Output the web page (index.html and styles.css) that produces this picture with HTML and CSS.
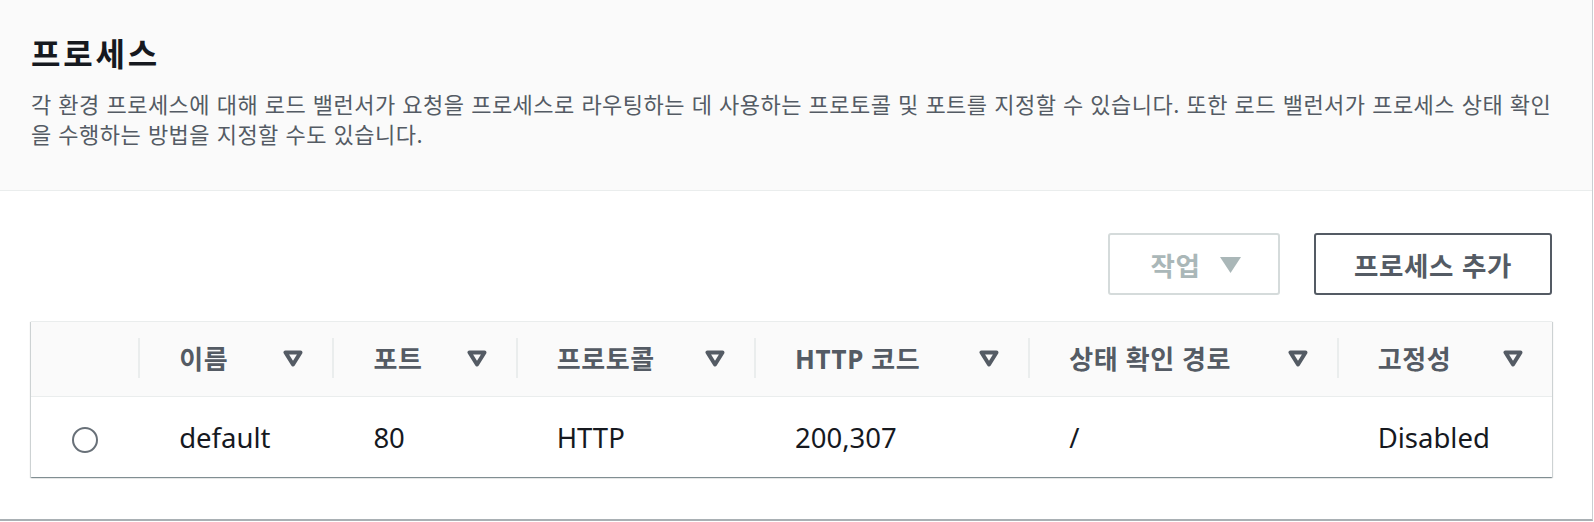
FILE: index.html
```html
<!DOCTYPE html>
<html lang="ko">
<head>
  <meta charset="UTF-8">
  <meta name="viewport" content="width=device-width, initial-scale=1.0">
  <title>프로세스</title>
  <link rel="stylesheet" href="styles.css">
</head>
<body>
  <section class="panel">
    <div class="panel-header">
      <h2 class="title">프로세스</h2>
      <p class="desc">각 환경 프로세스에 대해 로드 밸런서가 요청을 프로세스로 라우팅하는 데 사용하는 프로토콜 및 포트를 지정할 수 있습니다. 또한 로드 밸런서가 프로세스 상태 확인을 수행하는 방법을 지정할 수도 있습니다.</p>
    </div>

    <div class="panel-body">
      <div class="actions">
        <button class="btn btn-muted" disabled>
          작업
          <svg class="caret" width="21" height="16" viewBox="0 0 21 16"><polygon points="0,0 21,0 10.5,16" /></svg>
        </button>
        <button class="btn btn-primary">프로세스 추가</button>
      </div>

      <div class="table-card">
        <table class="proc-table">
          <colgroup>
            <col style="width: 107px">
            <col style="width: 194px">
            <col style="width: 183px">
            <col style="width: 238px">
            <col style="width: 274px">
            <col style="width: 308px">
            <col style="width: 215px">
          </colgroup>
          <thead>
            <tr>
              <th><div class="th-inner first"></div></th>
              <th><div class="th-inner"><span>이름</span><svg class="sort" viewBox="0 0 20 17"><polygon points="2.5,2.5 17.5,2.5 10,14.5" /></svg></div></th>
              <th><div class="th-inner"><span>포트</span><svg class="sort" viewBox="0 0 20 17"><polygon points="2.5,2.5 17.5,2.5 10,14.5" /></svg></div></th>
              <th><div class="th-inner"><span>프로토콜</span><svg class="sort" viewBox="0 0 20 17"><polygon points="2.5,2.5 17.5,2.5 10,14.5" /></svg></div></th>
              <th><div class="th-inner"><span>HTTP 코드</span><svg class="sort" viewBox="0 0 20 17"><polygon points="2.5,2.5 17.5,2.5 10,14.5" /></svg></div></th>
              <th><div class="th-inner"><span>상태 확인 경로</span><svg class="sort" viewBox="0 0 20 17"><polygon points="2.5,2.5 17.5,2.5 10,14.5" /></svg></div></th>
              <th><div class="th-inner"><span>고정성</span><svg class="sort" viewBox="0 0 20 17"><polygon points="2.5,2.5 17.5,2.5 10,14.5" /></svg></div></th>
            </tr>
          </thead>
          <tbody>
            <tr>
              <td class="select-cell"><span class="radio"></span></td>
              <td>default</td>
              <td>80</td>
              <td>HTTP</td>
              <td>200,307</td>
              <td>/</td>
              <td>Disabled</td>
            </tr>
          </tbody>
        </table>
      </div>
    </div>
  </section>
</body>
</html>
```

FILE: styles.css
```css
body {
  margin: 0;
  font-family: "Noto Sans", "Noto Sans CJK KR", sans-serif;
  color: #16191f;
  background: #ffffff;
}
.panel {
  width: 1592px;
  background: #ffffff;
  padding-bottom: 42px;
  border-right: 1px solid #c9ced1;
  border-bottom: 2px solid #a9b0b4;
}
.panel-header {
  background: #fafafa;
  border-bottom: 1px solid #eaeded;
  padding: 33px 40px 42px 31px;
}
.title {
  margin: 0;
  font-family: "Noto Sans CJK KR", sans-serif;
  font-size: 32px;
  line-height: 38px;
  letter-spacing: 2.8px;
  font-weight: 700;
  color: #16191f;
}
.desc {
  margin: 17px 0 0;
  font-family: "Noto Sans CJK KR", sans-serif;
  font-size: 22px;
  line-height: 30px;
  letter-spacing: 0.48px;
  color: #545b64;
}
.panel-body {
  padding: 42px 40px 0 31px;
}
.actions {
  display: flex;
  justify-content: flex-end;
  gap: 34px;
  margin-bottom: 26px;
}
.btn {
  display: flex;
  align-items: center;
  justify-content: center;
  box-sizing: border-box;
  height: 62px;
  border: 2px solid #545b64;
  border-radius: 3px;
  background: #ffffff;
  font-family: "Noto Sans CJK KR", sans-serif;
  font-size: 26.5px;
  letter-spacing: 0.6px;
  font-weight: 700;
  color: #545b64;
  cursor: pointer;
}
.btn-muted {
  width: 172px;
  gap: 20px;
  padding: 0 36px 0 40px;
  border-color: #d5dbdb;
  color: #aab7b8;
  cursor: default;
}
.btn-muted .caret {
  fill: #aab7b8;
  margin-top: 2px;
}
.btn-primary {
  width: 238px;
}
.table-card {
  border-top: 1px solid #eaeded;
  box-shadow: 0 1px 1px 0 rgba(0, 28, 36, 0.3), 1px 1px 1px 0 rgba(0, 28, 36, 0.15), -1px 1px 1px 0 rgba(0, 28, 36, 0.15);
}
.proc-table {
  width: 100%;
  table-layout: fixed;
  border-collapse: collapse;
}
.proc-table th {
  background: #fafafa;
  padding: 16px 0 18px;
  border-bottom: 1px solid #eaeded;
  text-align: left;
}
.th-inner {
  display: flex;
  align-items: center;
  justify-content: space-between;
  height: 40px;
  border-left: 2px solid #eaeded;
  padding: 0 29px 0 39px;
  font-size: 26px;
  letter-spacing: 0.6px;
  font-weight: 700;
  color: #545b64;
  white-space: nowrap;
}
.th-inner.first {
  border-left: none;
}
.sort {
  width: 20px;
  height: 17px;
  fill: none;
  stroke: #545b64;
  stroke-width: 4;
  stroke-linejoin: round;
}
.proc-table td {
  height: 80px;
  padding: 0 0 0 41px;
  font-size: 27.5px;
  color: #16191f;
  vertical-align: middle;
}
.proc-table td.select-cell {
  padding: 0;
  text-align: center;
}
.radio {
  display: inline-block;
  width: 22px;
  height: 22px;
  border: 2px solid #687078;
  border-radius: 50%;
  vertical-align: middle;
}
```
